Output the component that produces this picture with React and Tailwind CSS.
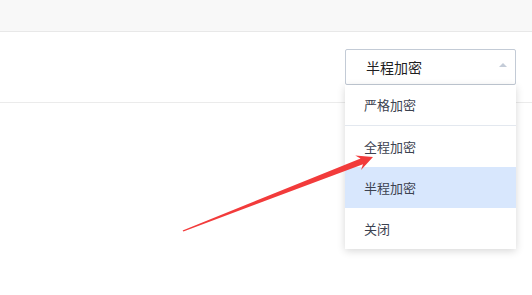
import { useState } from "react";

const OPTIONS = ["严格加密", "全程加密", "半程加密", "关闭"];
const FONT = { fontFamily: '"Noto Sans CJK SC", "Noto Sans", sans-serif' };

// Red annotation arrow drawn over the page
function Arrow() {
  return (
    <svg
      className="pointer-events-none absolute inset-0 z-20 h-full w-full"
      viewBox="0 0 532 295"
    >
      <polygon
        fill="#f23b3b"
        points="182.6,230.4 360.6,158.6 355.2,155.6 373,157 361,170 363,164.2 183.4,231.6"
      />
    </svg>
  );
}

export default function App() {
  const [value] = useState("半程加密");

  return (
    <div className="relative h-[295px] w-[532px] overflow-hidden bg-white" style={FONT}>
      <div className="h-8 border-b border-[#e8e8e8] bg-[#f8f8f8]" />

      <div className="flex h-[71px] items-center justify-end border-b border-[#ebebeb] pr-4">
        <div className="relative w-[171px]">
          <div className="flex h-9 items-center justify-between rounded-[2px] border border-[#c3cbd6] pl-5 pr-2 text-[14px] text-[#1f1f1f]">
            <span>{value}</span>
            <span className="mb-1 h-0 w-0 border-x-4 border-b-4 border-x-transparent border-b-[#c4ccd8]" />
          </div>

          <ul className="absolute left-0 top-full z-10 w-full bg-white text-[13px] text-[#3c4250] shadow-[0_2px_8px_rgba(0,0,0,0.16)]">
            {OPTIONS.map((opt, i) => (
              <li
                key={opt}
                className={
                  i === 0
                    ? "flex h-[41px] items-center border-b border-[#e3e8ef] pl-[19px]"
                    : opt === value
                      ? "flex h-[41px] items-center bg-[#d8e7fd] pl-[19px]"
                      : "flex h-[41px] items-center pl-[19px]"
                }
              >
                {opt}
              </li>
            ))}
          </ul>
        </div>
      </div>

      <Arrow />
    </div>
  );
}
